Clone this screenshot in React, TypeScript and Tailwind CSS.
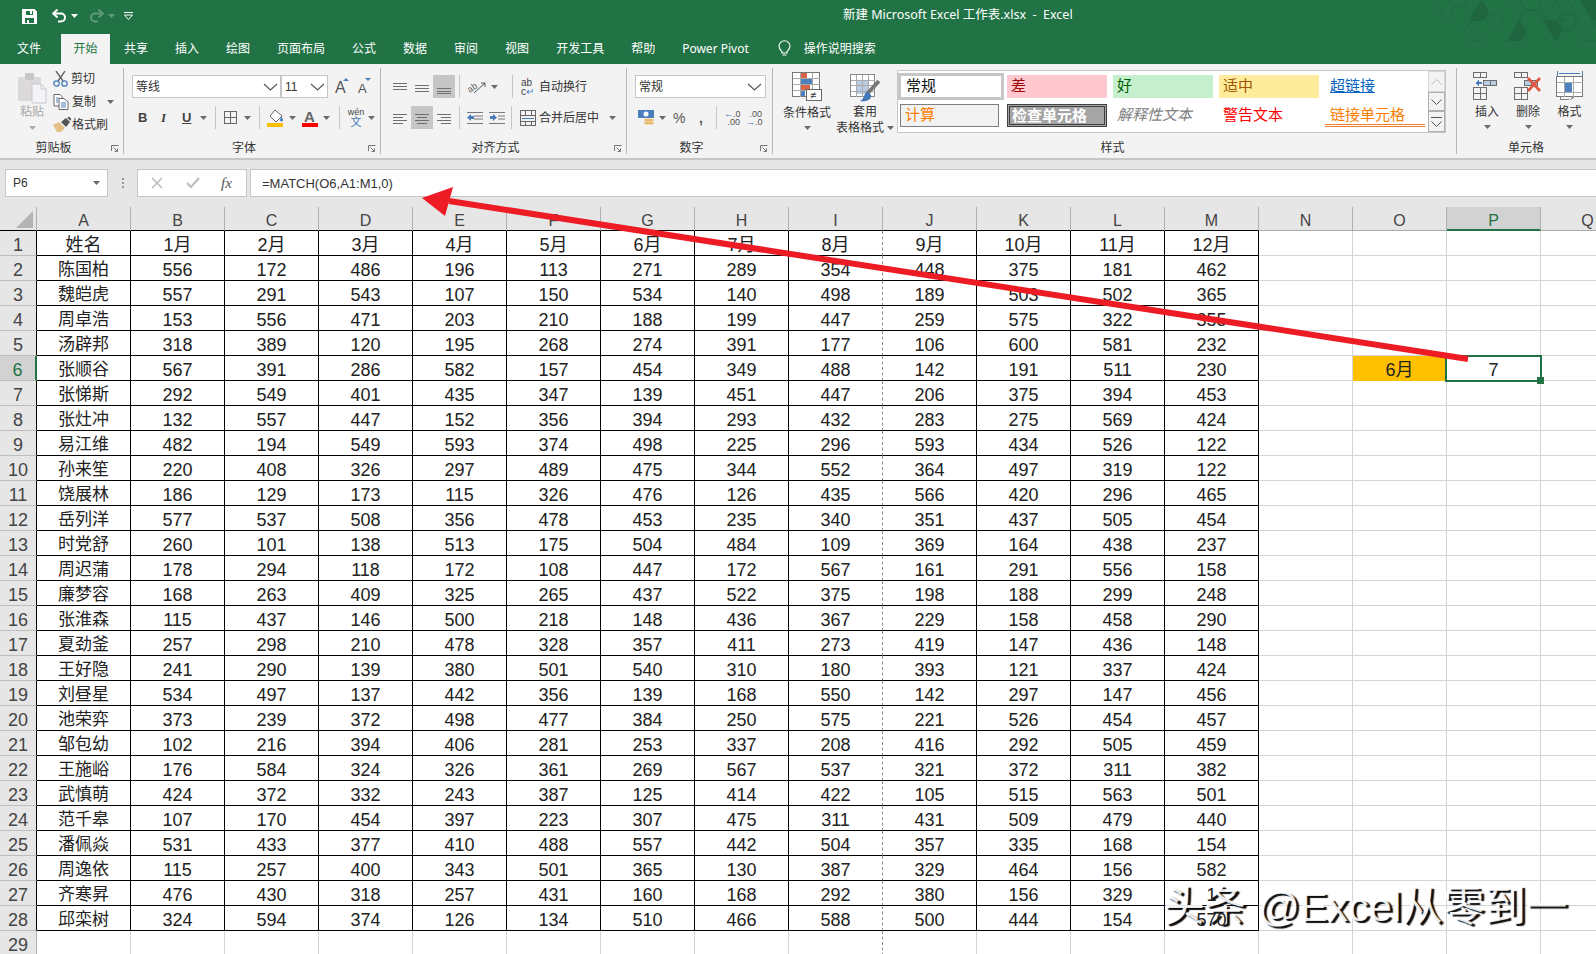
import React from "react";

const rows: string[] = [
  "陈国柏 556 172 486 196 113 271 289 354 448 375 181 462",
  "魏皑虎 557 291 543 107 150 534 140 498 189 503 502 365",
  "周卓浩 153 556 471 203 210 188 199 447 259 575 322 355",
  "汤辟邦 318 389 120 195 268 274 391 177 106 600 581 232",
  "张顺谷 567 391 286 582 157 454 349 488 142 191 511 230",
  "张悌斯 292 549 401 435 347 139 451 447 206 375 394 453",
  "张灶冲 132 557 447 152 356 394 293 432 283 275 569 424",
  "易江维 482 194 549 593 374 498 225 296 593 434 526 122",
  "孙来笙 220 408 326 297 489 475 344 552 364 497 319 122",
  "饶展林 186 129 173 115 326 476 126 435 566 420 296 465",
  "岳列洋 577 537 508 356 478 453 235 340 351 437 505 454",
  "时党舒 260 101 138 513 175 504 484 109 369 164 438 237",
  "周迟蒲 178 294 118 172 108 447 172 567 161 291 556 158",
  "廉梦容 168 263 409 325 265 437 522 375 198 188 299 248",
  "张淮森 115 437 146 500 218 148 436 367 229 158 458 290",
  "夏劲釜 257 298 210 478 328 357 411 273 419 147 436 148",
  "王好隐 241 290 139 380 501 540 310 180 393 121 337 424",
  "刘昼星 534 497 137 442 356 139 168 550 142 297 147 456",
  "池荣弈 373 239 372 498 477 384 250 575 221 526 454 457",
  "邹包幼 102 216 394 406 281 253 337 208 416 292 505 459",
  "王施峪 176 584 324 326 361 269 567 537 321 372 311 382",
  "武慎萌 424 372 332 243 387 125 414 422 105 515 563 501",
  "范千皋 107 170 454 397 223 307 475 311 431 509 479 440",
  "潘佩焱 531 433 377 410 488 557 442 504 357 335 168 154",
  "周逸依 115 257 400 343 501 365 130 387 329 464 156 582",
  "齐寒昇 476 430 318 257 431 160 168 292 380 156 329 1",
  "邱栾树 324 594 374 126 134 510 466 588 500 444 154 570",
];
const head = ["姓名", "1月", "2月", "3月", "4月", "5月", "6月", "7月", "8月", "9月", "10月", "11月", "12月"];
const letters = "ABCDEFGHIJKLMNOPQ".split("");

const Caret = ({ c = "#6a6a6a" }: { c?: string }) => (
  <svg width="7" height="4" viewBox="0 0 7 4" className="shrink-0"><path d="M0 0h7L3.5 4z" fill={c} /></svg>
);
const Chevron = () => (
  <svg width="15" height="8" viewBox="0 0 15 8" className="shrink-0"><path d="M1 1l6.5 6L14 1" fill="none" stroke="#555" strokeWidth="1.1" /></svg>
);
const Launcher = () => (
  <svg width="8" height="7" viewBox="0 0 8 7" className="shrink-0"><path d="M0.5 6V0.5H7.5M2.5 2.5L6 6M6.5 3.5V6.5H3.5" fill="none" stroke="#777" strokeWidth="1" /></svg>
);
const Lines = ({ ys, xs }: { ys: number[]; xs: [number, number][] }) => (
  <svg width="15" height="14" viewBox="0 0 15 14" className="shrink-0" shapeRendering="crispEdges">
    {ys.map((y, i) => <path key={i} d={`M${xs[i][0]} ${y}H${xs[i][1]}`} stroke="#6f6f6f" strokeWidth="1" />)}
  </svg>
);
const Sep = () => <div className="w-px h-[23px] bg-[#c6c6c6] shrink-0" />;

function Group({ cls, label, launcher = true, children }: { cls: string; label: string; launcher?: boolean; children: React.ReactNode }) {
  return (
    <div className={`h-[86px] my-[4px] box-border border-r border-[#b9b9b9] flex flex-col shrink-0 ${cls}`}>
      <div className="h-[72px] shrink-0">{children}</div>
      <div className="h-[14px] flex items-center pr-[4px] pt-[2px]">
        <span className={`flex-1 text-center text-[12px] leading-none text-[#333] ${launcher ? "pr-[4px]" : ""}`}>{label}</span>
        {launcher && <Launcher />}
      </div>
    </div>
  );
}

const Paste = () => (
  <svg width="30" height="32" viewBox="0 0 30 32">
    <rect x="1" y="5" width="23" height="24" rx="1" fill="#dcd9da" />
    <rect x="8" y="1" width="9" height="7" rx="1" fill="#c9c6c7" />
    <path d="M15 12h9l5 5v14H15z" fill="#f4f4f7" stroke="#c9c6d0" />
    <path d="M24 12v5h5" fill="none" stroke="#c9c6d0" />
  </svg>
);
const Scissors = () => (
  <svg width="15" height="16" viewBox="0 0 15 16">
    <path d="M3 0l7 10M12 0L5 10" stroke="#666" strokeWidth="1.4" fill="none" />
    <circle cx="3.5" cy="12.5" r="2.7" fill="none" stroke="#4a7ebb" strokeWidth="1.3" />
    <circle cx="11.5" cy="12.5" r="2.7" fill="none" stroke="#4a7ebb" strokeWidth="1.3" />
  </svg>
);
const Copy = () => (
  <svg width="16" height="16" viewBox="0 0 16 16">
    <path d="M1 .5h6l2 2V12H1z" fill="#fff" stroke="#666" />
    <path d="M6 4.5h5l4 3.5v7.5H6z" fill="#fff" stroke="#666" />
    <path d="M8 9h5M8 11h5M8 13h5M3 4h3M3 6h2M3 8h2" stroke="#4a7ebb" />
  </svg>
);
const Painter = () => (
  <svg width="18" height="15" viewBox="0 0 18 15">
    <path d="M0 8l6-3 6 6-4 4H4z" fill="#e5c188" />
    <path d="M8 5l5-4 4 4-4 5z" fill="#555" />
    <path d="M15 0l3 3" stroke="#555" strokeWidth="2" />
  </svg>
);
const Fill = () => (
  <svg width="17" height="18" viewBox="0 0 17 18">
    <path d="M8 1l7 6-6 6-6-6z" fill="#fff" stroke="#666" />
    <path d="M14 7c1 2 2 3 2 4a1.4 1.4 0 01-3 0c0-1 1-2 1-4z" fill="#4a7ebb" />
    <rect x="0" y="14" width="16" height="4" fill="#ffc000" />
  </svg>
);
const Save = () => (
  <svg width="15" height="15" viewBox="0 0 15 15" shapeRendering="crispEdges">
    <path fillRule="evenodd" d="M0 0h12l3 3v12H0zM4 1.5v4h6.5v-4zM3 9v4.5h9V9z" fill="#fff" />
    <rect x="8" y="2" width="2" height="3" fill="#fff" />
    <rect x="5" y="10.5" width="2" height="3" fill="#fff" />
  </svg>
);
const Undo = ({ c }: { c: string }) => (
  <svg width="15" height="14" viewBox="0 0 15 14">
    <path d="M2 4.5h7a4 4 0 010 8H6" fill="none" stroke={c} strokeWidth="2" />
    <path d="M5.5 0.5L1.2 4.5l4.3 4" fill="none" stroke={c} strokeWidth="2" />
  </svg>
);
const Pattern = () => (
  <svg width="163" height="44" viewBox="0 0 163 44" className="absolute top-0 right-0">
    <g fill="none" stroke="#1e6a40" strokeWidth="1">
      <path d="M1 0l13 21 7-12" />
      <circle cx="25" cy="0" r="7.5" />
      <circle cx="62" cy="21" r="7.5" />
      <path d="M31 31l7-10 12 20H37l-1-5z" />
      <path d="M75 0l12 20 6-11 3 1h6l3-1 4 10" />
      <circle cx="98" cy="0" r="10" />
      <path d="M123 0l-13 20h24z" />
      <circle cx="135" cy="21" r="7.5" />
      <circle cx="135" cy="21" r="10" />
      <path d="M147 41l13-20 3 5M147 41h16M137 9l6-9" />
    </g>
    <g fill="#1f6540">
      <path d="M49 0l7 13-6 8H38l-1-4z" />
      <path d="M86 20l8 12-6 9H74z" />
      <path d="M110 20h14l6 10-7 12z" />
      <path d="M147 0h16v20h-4z" />
    </g>
  </svg>
);

const Mini = ({ cells }: { cells: "ins" | "del" }) => (
  <svg width="28" height="30" viewBox="0 0 28 30" shapeRendering="crispEdges">
    <g fill="none" stroke="#6d6d6d">
      <path d="M.5 1.5h13v5H.5zM7 1.5v5" />
      <path d="M.5 16.5h13v12H.5zM.5 22.5h13M7 16.5v12" />
    </g>
    <path d="M10.5 9.5h13v5h-13zM17 9.5v5" fill="#b8cce4" stroke="#6d6d6d" />
    {cells === "ins" && <path d="M2 12l4-3v2h3v2H6v2z" fill="#4a7ebb" />}
    {cells === "del" && (
      <path d="M14 7l12 13M26 7L14 20" stroke="#e0563f" strokeWidth="2.6" shapeRendering="auto" />
    )}
  </svg>
);

const RibbonText = ({ children, cls = "" }: { children: React.ReactNode; cls?: string }) => (
  <span className={`text-[12px] leading-none text-[#333] whitespace-nowrap ${cls}`}>{children}</span>
);

export default function App() {
  return (
    <div className="relative w-[1596px] h-[954px] overflow-hidden bg-white font-['Liberation_Sans','Noto_Sans_CJK_SC',sans-serif]">
      {/* Title bar and tabs */}
      <div className="relative h-[64px] bg-[#217346] text-white">
        <Pattern />
        <div className="relative h-[34px] flex items-start pt-[9px]">
          <div className="ml-[22px]"><Save /></div>
          <div className="ml-[15px]"><Undo c="#fff" /></div>
          <div className="ml-[4px] mt-[5px]"><Caret c="#fff" /></div>
          <div className="ml-[11px] -scale-x-100"><Undo c="#5f9a7c" /></div>
          <div className="ml-[4px] mt-[5px]"><Caret c="#5f9a7c" /></div>
          <div className="ml-[9px] mt-[3px]">
            <svg width="9" height="8" viewBox="0 0 9 8"><path d="M0 .5h9" stroke="#fff" /><path d="M0.5 3h8L4.5 7.5z" fill="none" stroke="#fff" /></svg>
          </div>
          <div className="ml-[710px] -mt-[2px] text-[12.5px] leading-[16px] whitespace-pre font-['Noto_Sans','Noto_Sans_CJK_SC',sans-serif]">新建 Microsoft Excel 工作表.xlsx  -  Excel</div>
        </div>
        <div className="relative h-[30px] flex items-stretch text-[12px]">
          <div className="ml-[17px] w-[24px] flex items-center justify-center whitespace-nowrap pb-[1px]">文件</div>
          <div className="ml-[20px] w-[49px] flex items-center justify-center bg-[#f3f3f3] text-[#217346] pb-[1px]">开始</div>
          <div className="ml-[14px] flex items-center gap-[27px] whitespace-nowrap pb-[1px]">
            <span>共享</span><span>插入</span><span>绘图</span><span>页面布局</span><span>公式</span><span>数据</span><span>审阅</span><span>视图</span><span>开发工具</span><span>帮助</span>
            <span className="font-['Noto_Sans',sans-serif]">Power Pivot</span>
          </div>
          <div className="ml-[29px] flex items-center pb-[1px]">
            <svg width="13" height="17" viewBox="0 0 13 17"><path d="M4 11.5C2.5 10 1 8.8 1 6.2a5.5 5.5 0 0111 0c0 2.6-1.5 3.8-3 5.3v1.5H4zM4.5 15h4" fill="none" stroke="#fff" strokeWidth="1.1" /></svg>
          </div>
          <div className="ml-[13px] flex items-center whitespace-nowrap pb-[1px]">操作说明搜索</div>
        </div>
      </div>

      {/* Ribbon */}
      <div className="h-[96px] box-border border-b-2 border-[#c6c6c6] bg-[#f3f3f3] flex">
        <Group cls="w-[124px]" label="剪贴板">
          <div className="flex pl-[17px]">
            <div className="w-[30px] flex flex-col items-center pt-[4px]">
              <Paste />
              <RibbonText cls="!text-[#a8a8a8] mt-[2px]">粘贴</RibbonText>
              <div className="mt-[8px]"><Caret c="#aaa" /></div>
            </div>
            <div className="ml-[6px] flex flex-col">
              <div className="h-[22px] flex items-center gap-[3px]"><Scissors /><RibbonText>剪切</RibbonText></div>
              <div className="h-[23px] flex items-center gap-[3px]"><Copy /><RibbonText>复制</RibbonText><span className="ml-[8px]"><Caret /></span></div>
              <div className="h-[23px] flex items-center gap-[1px]"><Painter /><RibbonText>格式刷</RibbonText></div>
            </div>
          </div>
        </Group>

        <Group cls="w-[257px]" label="字体">
          <div className="pl-[8px] pt-[7px]">
            <div className="flex items-center h-[23px]">
              <div className="w-[149px] h-[23px] box-border border border-[#c6c6c6] bg-white flex items-center justify-between pl-[3px] pr-[2px]"><RibbonText>等线</RibbonText><Chevron /></div>
              <div className="w-[47px] h-[23px] box-border border border-[#c6c6c6] bg-white flex items-center justify-between pl-[3px] pr-[2px]"><RibbonText>11</RibbonText><Chevron /></div>
              <svg width="36" height="18" viewBox="0 0 36 18" className="ml-[7px] overflow-visible">
                <text x="0" y="15" fontSize="16" fill="#555">A</text>
                <path d="M8 3l3-3 3 3z" fill="#4a7ebb" />
                <text x="23" y="15" fontSize="13" fill="#555">A</text>
                <path d="M30 0h6l-3 3z" fill="#4a7ebb" />
              </svg>
            </div>
            <div className="flex items-center h-[23px] mt-[8px] text-[#444]">
              <span className="ml-[6px] w-[9px] text-[13px] font-bold leading-none">B</span>
              <span className="ml-[14px] w-[8px] text-[13px] italic font-['Liberation_Serif',serif] font-bold leading-none">I</span>
              <span className="ml-[13px] w-[10px] text-[13px] font-bold underline leading-none">U</span>
              <span className="ml-[8px]"><Caret /></span>
              <span className="ml-[8px]"><Sep /></span>
              <svg width="13" height="13" viewBox="0 0 13 13" className="ml-[8px]" shapeRendering="crispEdges"><path d="M.5.5h12v12H.5zM6.5.5v12M.5 6.5h12" fill="none" stroke="#666" /></svg>
              <span className="ml-[7px]"><Caret /></span>
              <span className="ml-[8px]"><Sep /></span>
              <span className="ml-[7px]"><Fill /></span>
              <span className="ml-[5px]"><Caret /></span>
              <svg width="16" height="18" viewBox="0 0 16 18" className="ml-[6px]"><text x="2" y="13" fontSize="15" fontWeight="bold" fill="#666">A</text><rect y="14" width="16" height="4" fill="#ff0000" /></svg>
              <span className="ml-[5px]"><Caret /></span>
              <span className="ml-[9px]"><Sep /></span>
              <div className="ml-[8px] w-[16px] flex flex-col items-center leading-none">
                <span className="text-[9px] leading-[10px] text-[#444]">wén</span>
                <span className="text-[11px] leading-[11px] text-[#3f78b5]">文</span>
              </div>
              <span className="ml-[4px]"><Caret /></span>
            </div>
          </div>
        </Group>

        <Group cls="w-[246px]" label="对齐方式">
          <div className="pl-[12px] pt-[7px]">
            <div className="flex items-center h-[23px]">
              <Lines ys={[3, 6, 9]} xs={[[0, 14], [0, 14], [0, 14]]} />
              <span className="ml-[7px]"><Lines ys={[5, 8, 11]} xs={[[0, 14], [0, 14], [0, 14]]} /></span>
              <div className="ml-[3px] w-[22px] h-[23px] bg-[#c6c6c6] flex items-center justify-center"><Lines ys={[8, 11, 13]} xs={[[0, 14], [0, 14], [0, 14]]} /></div>
              <span className="ml-[4px]"><Sep /></span>
              <svg width="20" height="16" viewBox="0 0 20 16" className="ml-[7px] overflow-visible"><text x="0" y="11" fontSize="9" fill="#555" transform="rotate(-35 6 8)">ab</text><path d="M7 14L18 4M14 4h4v4" fill="none" stroke="#555" /></svg>
              <span className="ml-[4px]"><Caret /></span>
              <span className="ml-[14px]"><Sep /></span>
              <div className="ml-[8px] w-[16px] flex flex-col items-start text-[#444] leading-none">
                <span className="text-[10px] leading-[9px]">ab</span>
                <span className="text-[10px] leading-[9px]">c<span className="text-[#4a7ebb]">↵</span></span>
              </div>
              <RibbonText cls="ml-[2px]">自动换行</RibbonText>
            </div>
            <div className="flex items-center h-[23px] mt-[8px]">
              <Lines ys={[3, 6, 9, 12]} xs={[[0, 14], [0, 10], [0, 14], [0, 10]]} />
              <div className="ml-[3px] w-[22px] h-[23px] bg-[#c6c6c6] flex items-center justify-center"><Lines ys={[3, 6, 9, 12]} xs={[[0, 14], [2, 12], [0, 14], [2, 12]]} /></div>
              <span className="ml-[4px]"><Lines ys={[3, 6, 9, 12]} xs={[[0, 14], [4, 14], [0, 14], [4, 14]]} /></span>
              <span className="ml-[7px]"><Sep /></span>
              <svg width="16" height="12" viewBox="0 0 16 12" className="ml-[7px]"><path d="M0 .5h16M7 4h9M7 7h9M0 11.5h16" stroke="#777" /><path d="M0 5.5L4 2v2h3v3H4v2z" fill="#4a7ebb" /></svg>
              <svg width="16" height="12" viewBox="0 0 16 12" className="ml-[6px]"><path d="M0 .5h16M9 4h7M9 7h7M0 11.5h16" stroke="#777" /><path d="M8 5.5L4 2v2H1v3h3v2z" fill="#4a7ebb" /></svg>
              <span className="ml-[6px]"><Sep /></span>
              <svg width="16" height="16" viewBox="0 0 16 16" className="ml-[8px]" shapeRendering="crispEdges"><path d="M.5.5h15v15H.5zM.5 5h15M.5 11h15M5 .5v4.5M11 .5v4.5M5 11v4.5M11 11v4.5" fill="none" stroke="#666" /><path d="M2 8h12" stroke="#4a7ebb" /></svg>
              <RibbonText cls="ml-[3px]">合并后居中</RibbonText>
              <span className="ml-[10px]"><Caret /></span>
            </div>
          </div>
        </Group>

        <Group cls="w-[146px]" label="数字">
          <div className="pl-[8px] pt-[7px]">
            <div className="w-[131px] h-[23px] box-border border border-[#c6c6c6] bg-white flex items-center justify-between pl-[3px] pr-[3px]"><RibbonText>常规</RibbonText><Chevron /></div>
            <div className="flex items-center h-[23px] mt-[8px] text-[#555]">
              <svg width="17" height="16" viewBox="0 0 17 16" className="ml-[3px]"><rect width="16" height="8" fill="#4a7ebb" /><circle cx="8" cy="4" r="2.5" fill="#fff" /><ellipse cx="11" cy="10" rx="5" ry="1.5" fill="#e9b970" /><ellipse cx="11" cy="13" rx="5" ry="1.5" fill="#e9b970" /></svg>
              <span className="ml-[4px]"><Caret /></span>
              <span className="ml-[7px] text-[14px] leading-none w-[13px]">%</span>
              <span className="ml-[13px] text-[14px] font-bold leading-none w-[4px]">,</span>
              <span className="ml-[13px]"><Sep /></span>
              <div className="ml-[7px] w-[16px] flex flex-col leading-none text-[9px] text-right">
                <span className="leading-[8px]"><span className="text-[#3f78b5]">←</span>.0</span>
                <span className="leading-[8px]">.00</span>
              </div>
              <div className="ml-[6px] w-[16px] flex flex-col leading-none text-[9px] text-right">
                <span className="leading-[8px]">.00</span>
                <span className="leading-[8px]"><span className="text-[#3f78b5]">→</span>.0</span>
              </div>
            </div>
          </div>
        </Group>

        <Group cls="w-[684px]" label="样式" launcher={false}>
          <div className="flex">
            <div className="ml-[9px] w-[50px] flex flex-col items-center pt-[4px]">
              <svg width="30" height="30" viewBox="0 0 30 30" shapeRendering="crispEdges">
                <path d="M.5.5h27v24H.5z" fill="#fff" stroke="#777" />
                <rect x="8" y="1" width="7" height="5" fill="#d8664a" />
                <rect x="8" y="7" width="12" height="5" fill="#4f81bd" />
                <rect x="8" y="13" width="10" height="5" fill="#d8664a" />
                <rect x="8" y="19" width="5" height="5" fill="#4f81bd" />
                <path d="M8 .5v24M20 .5v24M.5 6.5h27M.5 12.5h27M.5 18.5h27" stroke="#aaa" fill="none" />
                <path d="M14.5 17.5h15v11h-15z" fill="#fff" stroke="#666" />
                <text x="18" y="27" fontSize="11" fill="#333">≠</text>
              </svg>
              <RibbonText cls="mt-[5px]">条件格式</RibbonText>
              <span className="mt-[7px]"><Caret /></span>
            </div>
            <div className="ml-[2px] w-[62px] flex flex-col items-center pt-[6px]">
              <svg width="30" height="28" viewBox="0 0 30 28">
                <g shapeRendering="crispEdges">
                  <path d="M.5.5h24v22H.5z" fill="#fff" stroke="#888" />
                  <rect x="7" y="6" width="12" height="14" fill="#b8cce4" />
                  <path d="M6.5.5v22M12.5.5v22M18.5.5v22M.5 6h24M.5 11.5h24M.5 17h24" stroke="#aaa" fill="none" />
                </g>
                <path d="M29 7L17 20" stroke="#777" strokeWidth="4" />
                <path d="M18 18c-5 1-3 7-8 9 6 1 12-1 11-6z" fill="#3f78b5" />
              </svg>
              <RibbonText cls="mt-[4px]">套用</RibbonText>
              <div className="flex items-center mt-[4px] gap-[3px]"><RibbonText>表格格式</RibbonText><Caret /></div>
            </div>
            <div className="ml-[1px] mt-[2px] h-[63px] w-[549px] box-border border border-[#c6c6c6] bg-white flex">
              <div className="grid grid-cols-[103px_100px_100px_100px_100px] grid-rows-[27px_23px] gap-x-[6px] gap-y-[4px] pt-[2px] text-[15px] leading-none">
                <div className="box-border border-[3px] border-[#c6c6c6] flex items-center pl-[5px] pb-[2px] text-[#111] -mr-[3px]">常规</div>
                <div className="bg-[#ffc7ce] text-[#9c0006] flex items-center pl-[4px] pb-[2px] my-[2px]">差</div>
                <div className="bg-[#c6efce] text-[#006100] flex items-center pl-[4px] pb-[2px] my-[2px]">好</div>
                <div className="bg-[#ffeb9c] text-[#9c5700] flex items-center pl-[4px] pb-[2px] my-[2px]">适中</div>
                <div className="text-[#0563c1] underline flex items-center pl-[5px] pb-[2px]">超链接</div>
                <div className="box-border bg-[#f2f2f2] border border-[#7f7f7f] text-[#fa7d00] flex items-center pl-[4px] pb-[2px] mx-[2px]">计算</div>
                <div className="box-border bg-[#a5a5a5] border-[3px] border-double border-[#3f3f3f] text-white font-bold flex items-center pl-[2px] pb-[1px]">检查单元格</div>
                <div className="text-[#7f7f7f] italic flex items-center pl-[4px] pb-[2px]">解释性文本</div>
                <div className="text-[#ff0000] flex items-center pl-[4px] pb-[2px]">警告文本</div>
                <div className="box-border text-[#fa7d00] border-b-[3px] border-double border-[#ed7d31] flex items-center pl-[5px]">链接单元格</div>
              </div>
              <div className="w-[17px] ml-auto flex flex-col">
                <div className="h-[21px] box-border border border-[#d5d5d5] bg-[#f3f3f3] flex items-center justify-center">
                  <svg width="11" height="6" viewBox="0 0 11 6"><path d="M.5 5.5l5-5 5 5" fill="none" stroke="#bbb" /></svg>
                </div>
                <div className="h-[19px] box-border border border-[#b0b0b0] bg-[#f3f3f3] flex items-center justify-center">
                  <svg width="11" height="6" viewBox="0 0 11 6"><path d="M.5.5l5 5 5-5" fill="none" stroke="#555" /></svg>
                </div>
                <div className="h-[21px] box-border border border-[#b0b0b0] bg-[#f3f3f3] flex flex-col items-center justify-center gap-[3px]">
                  <div className="w-[11px] h-px bg-[#555]" />
                  <svg width="11" height="6" viewBox="0 0 11 6"><path d="M.5.5l5 5 5-5" fill="none" stroke="#555" /></svg>
                </div>
              </div>
            </div>
          </div>
        </Group>

        <div className="flex-1 h-[86px] my-[4px] flex flex-col">
          <div className="h-[72px] shrink-0 flex pl-[16px] pt-[3px]">
            <div className="w-[28px] flex flex-col items-center"><Mini cells="ins" /><RibbonText cls="mt-[5px]">插入</RibbonText><span className="mt-[7px]"><Caret /></span></div>
            <div className="ml-[13px] w-[28px] flex flex-col items-center"><Mini cells="del" /><RibbonText cls="mt-[5px]">删除</RibbonText><span className="mt-[7px]"><Caret /></span></div>
            <div className="ml-[14px] w-[27px] flex flex-col items-center">
              <svg width="27" height="30" viewBox="0 0 27 30" shapeRendering="crispEdges">
                <path d="M1 0v5M26 0v5M3 2.5h21" stroke="#4a7ebb" />
                <path d="M.5 5.5h26v20H.5z" fill="#fff" stroke="#777" />
                <rect x="8" y="11" width="8" height="10" fill="#4f81bd" />
                <path d="M8 5.5v20M17 5.5v20M.5 11h26M.5 21h26" stroke="#aaa" fill="none" />
                <path d="M4 25.5v3h9M14 28.5l5-3" stroke="#888" fill="none" />
              </svg>
              <RibbonText cls="mt-[5px]">格式</RibbonText><span className="mt-[7px]"><Caret /></span>
            </div>
          </div>
          <div className="h-[14px] flex items-center pl-[51px] pt-[2px]">
            <RibbonText>单元格</RibbonText>
          </div>
        </div>
      </div>

      {/* Formula bar */}
      <div className="h-[47px] bg-[#e6e6e6] flex pt-[9px]">
        <div className="ml-[5px] w-[103px] h-[28px] box-border border border-[#c6c6c6] bg-white flex items-center justify-between pl-[7px] pr-[7px]">
          <span className="text-[12px] leading-none text-[#333]">P6</span>
          <Caret />
        </div>
        <div className="ml-[13px] w-[4px] h-[28px] flex flex-col items-center justify-center gap-[2px]">
          <div className="w-[2px] h-[2px] bg-[#999]" /><div className="w-[2px] h-[2px] bg-[#999]" /><div className="w-[2px] h-[2px] bg-[#999]" />
        </div>
        <div className="ml-[12px] w-[110px] h-[28px] box-border border border-[#c6c6c6] bg-white flex items-center">
          <svg width="12" height="12" viewBox="0 0 12 12" className="ml-[13px]"><path d="M1 1l10 10M11 1L1 11" stroke="#bcbcbc" strokeWidth="1.6" /></svg>
          <svg width="14" height="12" viewBox="0 0 14 12" className="ml-[23px]"><path d="M1 6l4 4 8-9" fill="none" stroke="#bcbcbc" strokeWidth="2" /></svg>
          <span className="ml-[21px] text-[15px] italic font-['Liberation_Serif',serif] text-[#555] leading-none">fx</span>
        </div>
        <div className="ml-[3px] flex-1 h-[28px] box-border border border-r-0 border-[#c6c6c6] bg-white flex items-center pl-[11px]">
          <span className="text-[13px] leading-none text-[#333]">=MATCH(O6,A1:M1,0)</span>
        </div>
      </div>

      {/* Column headers */}
      <div className="flex h-[24px] bg-[#e6e6e6]">
        <div className="w-[37px] h-[24px] box-border border-r border-b border-r-[#b0b0b0] border-b-black shrink-0 flex items-end justify-end pr-[3px] pb-[2px]">
          <svg width="17" height="17" viewBox="0 0 17 17"><path d="M17 0v17H0z" fill="#b4b4b4" /></svg>
        </div>
        {letters.map((l, i) => {
          const sel = l === "P";
          const cls = sel
            ? "bg-[#d2d2d2] text-[#217346] border-b-2 border-b-[#217346] border-r-[#b0b0b0]"
            : i < 13
              ? "text-[#444] border-b border-b-black border-r-[#b0b0b0]"
              : "text-[#444] border-b border-b-[#ababab] border-r-[#b0b0b0]";
          return (
            <div key={l} className={`w-[94px] h-[24px] box-border border-r shrink-0 flex items-center justify-center pt-[5px] text-[16px] leading-none ${cls}`}>{l}</div>
          );
        })}
      </div>

      {/* Rows */}
      {Array.from({ length: 29 }).map((_, r) => {
        const n = r + 1;
        const vals = r === 0 ? head : r >= 28 ? [] : rows[r - 1].split(" ");
        const isSel = n === 6;
        return (
          <div key={n} className="flex h-[25px]">
            <div className={`w-[37px] h-[25px] box-border shrink-0 flex items-center justify-center pt-[3px] text-[18px] leading-none border-b border-b-[#bdbdbd] ${isSel ? "bg-[#d2d2d2] text-[#217346] border-r-2 border-r-[#217346]" : n === 29 ? "bg-[#e6e6e6] text-[#444] border-r border-r-[#b0b0b0]" : "bg-[#e6e6e6] text-[#444] border-r border-r-black"}`}>{n}</div>
            {letters.map((l, c) => {
              let extra = "border-[#d4d4d4]";
              let content: React.ReactNode = c < vals.length ? vals[c] : null;
              if (n <= 28 && c < 13) extra = c === 8 ? "border-b-black border-r-[#8f8f8f] [border-right-style:dashed]" : "border-black";
              if (n === 29 && c === 8) extra = "border-b-[#d4d4d4] border-r-[#8f8f8f] [border-right-style:dashed]";
              if (isSel && l === "O") { extra = "border-[#ffc000] bg-[#ffc000]"; content = "6月"; }
              if (isSel && l === "P") { extra = "border-[#d4d4d4] relative"; content = "7"; }
              const lifted = c === 12 && (n === 27 || n === 28);
              const size = c === 0 && n > 1 ? "text-[17px]" : "text-[18px]";
              return (
                <div key={l} className={`w-[94px] h-[25px] box-border border-r border-b shrink-0 flex items-center justify-center pt-[3px] leading-none text-[#222] ${size} ${extra}`}>
                  {lifted ? <span className="relative z-20">{content}</span> : content}
                  {isSel && l === "P" && (
                    <div className="absolute -left-[2px] -top-[1px] w-[97px] h-[27px] box-border border-2 border-[#217346]">
                      <div className="absolute -right-[4px] -bottom-[4px] w-[7px] h-[7px] bg-[#217346]" />
                    </div>
                  )}
                </div>
              );
            })}
          </div>
        );
      })}

      {/* Red annotation arrow */}
      <svg width="1596" height="954" viewBox="0 0 1596 954" className="absolute inset-0 z-10 pointer-events-none">
        <path d="M449 201L1468 359" stroke="#ed1c24" strokeWidth="6" fill="none" />
        <path d="M422 198L453 187L445 216z" fill="#ed1c24" />
      </svg>

      {/* Watermark */}
      <div className="absolute z-10 left-[1163px] top-[884px] text-[41.5px] leading-[46px] whitespace-pre text-white/90 [text-shadow:3px_2px_1px_rgba(0,0,0,0.95)]">头条 @Excel从零到一</div>
    </div>
  );
}
